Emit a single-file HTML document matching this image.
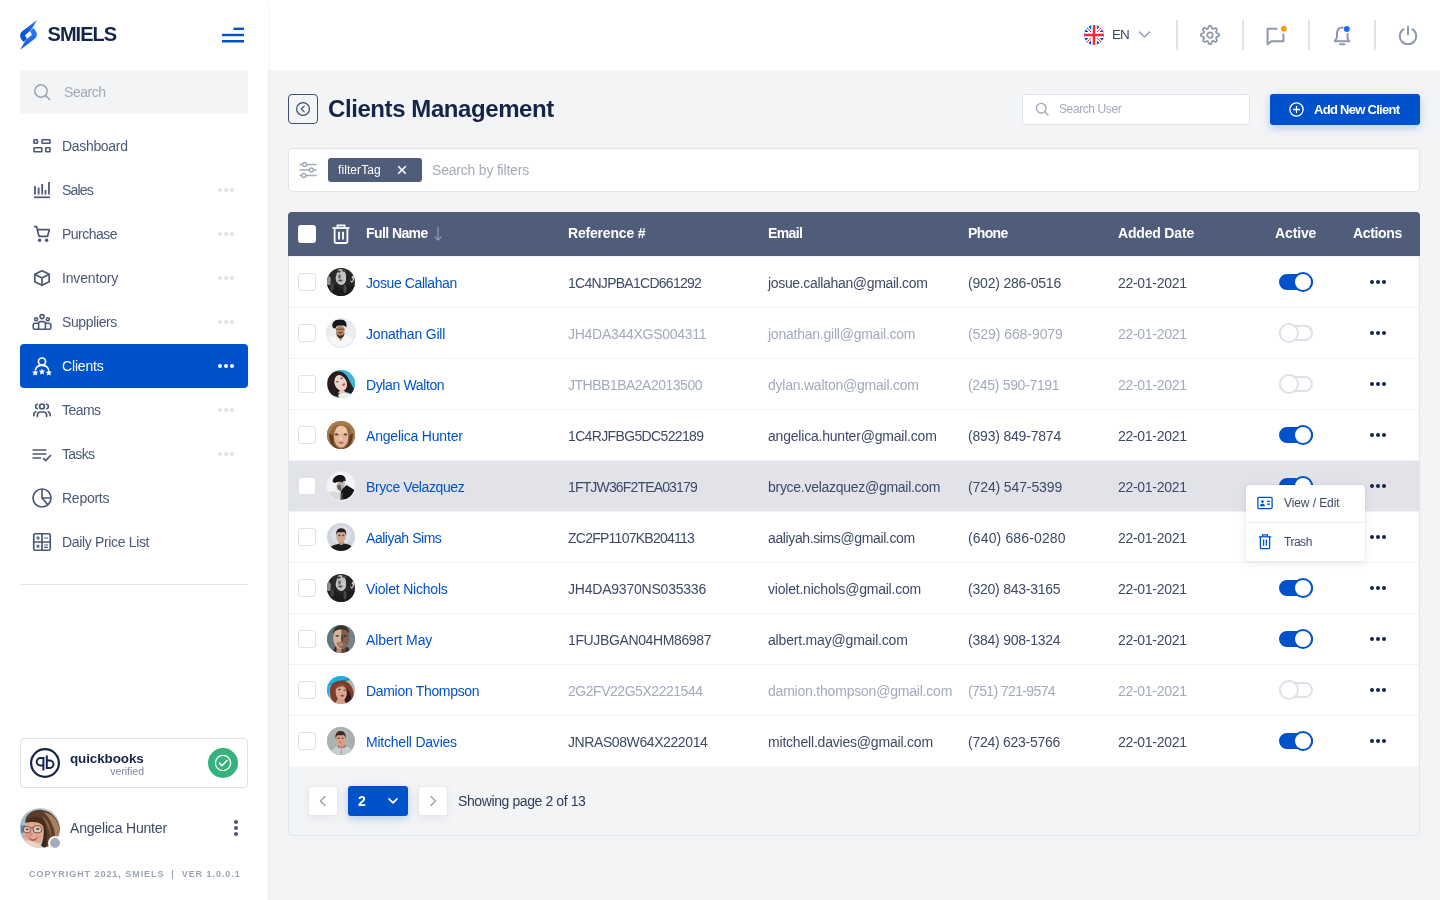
<!DOCTYPE html>
<html lang="en">
<head>
<meta charset="utf-8">
<title>Clients Management</title>
<style>
*{box-sizing:border-box;margin:0;padding:0}
html,body{width:1440px;height:900px;overflow:hidden}
body{font-family:"Liberation Sans",sans-serif;background:#f3f4f6;color:#3c4a67;position:relative}
.abs{position:absolute}
#side,#top,#hdr,#main,#tbl{will-change:transform}
#hdr,#main,#tbl{position:absolute;left:0;top:0;width:1440px;height:900px}
svg{display:block}
/* sidebar */
#side{position:absolute;left:0;top:0;width:268px;height:900px;background:#fff;box-shadow:1px 0 3px rgba(20,30,60,.035);z-index:2}
#top{position:absolute;left:268px;top:0;width:1172px;height:70px;background:#fff}
.brand{position:absolute;left:47.500px;top:22px;font-size:20px;font-weight:700;color:#15254a;letter-spacing:-.95px;line-height:24px}
.sbox{position:absolute;left:20px;top:70px;width:228px;height:44px;background:#f3f4f6;border-radius:4px}
.sbox span{position:absolute;left:44px;top:13px;font-size:14px;line-height:18px;color:#a2abbb;letter-spacing:-.45px}
.nav{position:absolute;left:20px;width:228px;height:44px;border-radius:4px;color:#4a5877;font-size:14px}
.nav .lbl{position:absolute;left:42px;top:13px;line-height:18px;letter-spacing:-.3px}
.nav .ic{position:absolute;left:12px;top:12px;width:20px;height:20px}
.nav .dots{position:absolute;left:198px;top:20px;width:16px;height:4px}
.nav .dots i{position:absolute;top:0;width:4px;height:4px;border-radius:50%;background:#dfe2e9}
.nav .dots i:nth-child(1){left:0}.nav .dots i:nth-child(2){left:6px}.nav .dots i:nth-child(3){left:12px}
.nav.act{background:#0052cc;color:#fff}
.nav.act .dots i{background:#fff}
.vdiv{position:absolute;top:20px;width:2px;height:30px;background:#dfe2e9}

.th{font-size:14px;line-height:18px;font-weight:700;color:#fff;letter-spacing:-.4px;white-space:nowrap}
.row{left:289px;width:1130px;height:51px;border-top:1px solid #f2f3f6}
.cb{left:298px;width:18px;height:18px;background:#fff;border:1px solid #dfe2e9;border-radius:3px}
.td{font-size:14px;line-height:18px;color:#3c4a67;letter-spacing:-.3px;white-space:nowrap}
.td.off{color:#a2abbb}
.td.nm{color:#0052cc}
.td.rf{letter-spacing:-.6px}
.td.ph{letter-spacing:-.2px}
.tg{left:1279px;width:34px;height:16px;border-radius:8px;background:#fff;border:2px solid #dfe1e8}
.tg i{position:absolute;left:-2px;top:-4px;width:20px;height:20px;border-radius:50%;background:#fff;border:2px solid #dfe1e8}
.tg.on{background:#0052cc;border-color:#0052cc}
.tg.on i{left:12px;border-color:#0052cc}
.dd{left:1370px;width:16px;height:4px}
.dd i{position:absolute;top:0;width:4px;height:4px;border-radius:50%;background:#15254a}
.dd i:nth-child(1){left:0}.dd i:nth-child(2){left:6px}.dd i:nth-child(3){left:12px}
.pb{width:30px;height:30px;background:#fff;border:1px solid #e6e8ee;border-radius:3px;box-shadow:0 3px 8px rgba(30,40,70,.06);display:flex;align-items:center;justify-content:center}
.pm{font-size:12px;line-height:16px;color:#3c4a67;letter-spacing:-.2px;white-space:nowrap}
</style>
</head>
<body>
<div id="side">
  <svg class="abs" style="left:20px;top:20px" width="17" height="30" viewBox="0 0 17 30">
    <defs><linearGradient id="lg1" x1="1" y1="0" x2="0" y2="1"><stop offset="0" stop-color="#2b7dff"/><stop offset=".55" stop-color="#1158dc"/><stop offset="1" stop-color="#0052cc"/></linearGradient>
    <linearGradient id="lg2" x1="1" y1="0" x2="0" y2="1"><stop offset="0" stop-color="#1158dc"/><stop offset=".5" stop-color="#1d68ec"/><stop offset="1" stop-color="#2f80ff"/></linearGradient></defs>
    <path d="M17 0L1.900 11.600Q-0.600 14 0.400 17.400Q1.400 20.200 3.800 21.900L7 19L5 15.200L10 11L13 7Z" fill="url(#lg1)"/>
    <path d="M17 0L1.900 11.600Q-0.600 14 0.400 17.400Q1.400 20.200 3.800 21.900L7 19L5 15.200L10 11L13 7Z" fill="url(#lg2)" transform="rotate(180 8.500 15)"/>
  </svg>
  <div class="brand">SMIELS</div>
  <svg class="abs" style="left:221px;top:26px" width="24" height="18" viewBox="0 0 24 18" fill="#0052cc"><rect x="12.500" y="1.600" width="10.500" height="2.400"/><rect x="1" y="7.800" width="22" height="2.400"/><rect x="1" y="14" width="22" height="2.500"/></svg>
  <div class="sbox">
    <svg class="abs" style="left:13px;top:13px" width="18" height="18" viewBox="0 0 18 18" fill="none" stroke="#9aa4b5" stroke-width="1.5" stroke-linecap="round"><circle cx="8" cy="8" r="6.2"/><path d="M12.6 12.6 L16.5 16.5"/></svg>
    <span>Search</span>
  </div>

  <div class="nav" style="top:124px">
    <svg class="ic" viewBox="0 0 20 20" fill="none" stroke="#4a5877" stroke-width="1.600"><rect x="2" y="3.800" width="3.400" height="3.500" rx=".5"/><rect x="10" y="3.800" width="8" height="3.500" rx=".5"/><rect x="2" y="11.700" width="7.800" height="4" rx=".5"/><rect x="13.700" y="11.700" width="4.300" height="4" rx=".5"/></svg>
    <span class="lbl" style="letter-spacing:-0.32px">Dashboard</span>
  </div>
  <div class="nav" style="top:168px">
    <svg class="ic" viewBox="0 0 20 20" fill="none" stroke="#4a5877" stroke-width="1.700" stroke-linecap="butt"><path d="M3 6V14.600M6.600 7.500V14.600M10.200 4V14.600M13.500 10V14.600M17 2V14.600" stroke-width="1.800"/><path d="M2 17.3H18" /></svg>
    <span class="lbl" style="letter-spacing:-0.80px">Sales</span><span class="dots"><i></i><i></i><i></i></span>
  </div>
  <div class="nav" style="top:212px">
    <svg class="ic" viewBox="0 0 20 20" fill="none" stroke="#4a5877" stroke-width="1.700" stroke-linejoin="round"><path d="M2 2.7H4.6L7 12.3H15.6L17.3 5.7H5.4"/><circle cx="7.6" cy="16.3" r="1.700" fill="#4a5877" stroke="none"/><circle cx="14.6" cy="16.3" r="1.700" fill="#4a5877" stroke="none"/></svg>
    <span class="lbl" style="letter-spacing:-0.50px">Purchase</span><span class="dots"><i></i><i></i><i></i></span>
  </div>
  <div class="nav" style="top:256px">
    <svg class="ic" viewBox="0 0 20 20" fill="none" stroke="#4a5877" stroke-width="1.700" stroke-linejoin="round"><path d="M10 2.7L17.2 6.3V13.7L10 17.3L2.8 13.7V6.3Z"/><path d="M2.8 6.3L10 10L17.2 6.3M10 10V17.3"/></svg>
    <span class="lbl" style="letter-spacing:-0.16px">Inventory</span><span class="dots"><i></i><i></i><i></i></span>
  </div>
  <div class="nav" style="top:300px">
    <svg class="ic" viewBox="0 0 20 20" fill="none" stroke="#4a5877" stroke-width="1.600" stroke-linejoin="round"><circle cx="10" cy="4.6" r="2"/><circle cx="4.2" cy="7.2" r="1.5"/><circle cx="15.8" cy="7.2" r="1.5"/><path d="M6.6 17.3V11.6a2 2 0 0 1 2-2h2.8a2 2 0 0 1 2 2V17.3"/><path d="M6.6 11.3H3.2a2 2 0 0 0-2 2V15.8a1.5 1.5 0 0 0 1.5 1.5H17.3a1.5 1.5 0 0 0 1.5-1.5V13.3a2 2 0 0 0-2-2H13.4"/></svg>
    <span class="lbl" style="letter-spacing:-0.38px">Suppliers</span><span class="dots"><i></i><i></i><i></i></span>
  </div>
  <div class="nav act" style="top:344px">
    <svg class="ic" viewBox="0 0 20 20" fill="none" stroke="#fff" stroke-width="1.700" stroke-linecap="round"><circle cx="10" cy="5.6" r="3.6"/><path d="M3.6 13.2C4.6 10.6 7 9.4 10 9.4s5.4 1.200 6.4 3.800"/><g fill="#fff" stroke="none"><path d="M3.200 13.600l.95 1.950 2.150.3-1.550 1.500.35 2.150-1.900-1-1.900 1 .35-2.150-1.550-1.500 2.150-.3z"/><path d="M3.200 13.600l.95 1.950 2.150.3-1.550 1.500.35 2.150-1.900-1-1.900 1 .35-2.150-1.550-1.500 2.150-.3z" transform="translate(6.800 -1)"/><path d="M3.200 13.600l.95 1.950 2.150.3-1.550 1.500.35 2.150-1.900-1-1.900 1 .35-2.150-1.550-1.500 2.150-.3z" transform="translate(13.600 0)"/></g></svg>
    <span class="lbl" style="letter-spacing:-0.17px">Clients</span><span class="dots"><i></i><i></i><i></i></span>
  </div>
  <div class="nav" style="top:388px">
    <svg class="ic" viewBox="0 0 20 20" fill="none" stroke="#4a5877" stroke-width="1.700" stroke-linecap="round"><circle cx="10" cy="6.400" r="2.400"/><path d="M5.400 16.300v-1.300a3 3 0 0 1 3-3h3.200a3 3 0 0 1 3 3v1.300"/><path d="M5.200 4.200a2.300 2.300 0 0 0 0 4.400M14.800 4.200a2.300 2.300 0 0 1 0 4.400"/><path d="M1.800 15.600v-1a3 3 0 0 1 2-2.800M18.200 15.600v-1a3 3 0 0 0-2-2.800"/></svg>
    <span class="lbl" style="letter-spacing:-0.54px">Teams</span><span class="dots"><i></i><i></i><i></i></span>
  </div>
  <div class="nav" style="top:432px">
    <svg class="ic" viewBox="0 0 20 20" fill="none" stroke="#4a5877" stroke-width="1.700"><path d="M0.500 6H14.500M0.500 10H14.500M0.500 14H9"/><path d="M11.200 14.200L13.600 16.600L19 11" /></svg>
    <span class="lbl" style="letter-spacing:-0.72px">Tasks</span><span class="dots"><i></i><i></i><i></i></span>
  </div>
  <div class="nav" style="top:476px">
    <svg class="ic" viewBox="0 0 20 20" fill="none" stroke="#4a5877" stroke-width="1.700"><circle cx="10" cy="10" r="9"/><path d="M10 1.200V10H18.800M10 10L15.800 16.600"/></svg>
    <span class="lbl" style="letter-spacing:-0.26px">Reports</span>
  </div>
  <div class="nav" style="top:520px">
    <svg class="ic" viewBox="0 0 20 20" fill="none" stroke="#4a5877" stroke-width="1.700"><rect x="1.750" y="1.750" width="16.500" height="16.500" rx="1.500"/><path d="M10 1.750V18.250M1.750 10H18.250"/><path d="M4 6H8M6 4V8M12.200 6H16M4.600 12.800L7.400 15.600M7.400 12.800L4.600 15.600M12.200 13H16M12.200 15.400H16" stroke-width="1.200"/></svg>
    <span class="lbl" style="letter-spacing:-0.34px">Daily Price List</span>
  </div>
  <div class="abs" style="left:20px;top:584px;width:228px;height:1px;background:#e1e4ea"></div>
<div class="abs" style="left:20px;top:738px;width:228px;height:50px;border:1px solid #dfe2e9;border-radius:4px"></div>
  <svg class="abs" style="left:30px;top:748px" width="30" height="30" viewBox="0 0 30 30" fill="none" stroke="#15254a"><circle cx="15" cy="15" r="13.900" stroke-width="2.200"/><path d="M13.400 22.400V10H10.400a3.700 3.700 0 0 0 0 7.400H13" stroke-width="2"/><path d="M16.800 7.600V20H19.800a3.700 3.700 0 0 0 0-7.400H17.200" stroke-width="2"/></svg>
  <div class="abs" id="qb" style="left:70px;top:751px;font-size:13.500px;line-height:16px;font-weight:700;color:#15254a;letter-spacing:-.14px">quickbooks</div>
  <div class="abs" id="vf" style="left:90px;width:54px;text-align:right;top:764.500px;font-size:10.500px;line-height:12px;color:#7c889f;letter-spacing:0">verified</div>
  <svg class="abs" style="left:208px;top:748px" width="30" height="30" viewBox="0 0 30 30"><circle cx="15" cy="15" r="15" fill="#36b27c"/><circle cx="15" cy="15" r="7.600" fill="none" stroke="#fff" stroke-width="1.300"/><path d="M11.400 15.200L14 17.700L19 12.500" fill="none" stroke="#fff" stroke-width="1.600" stroke-linecap="round" stroke-linejoin="round"/></svg>
  <svg class="abs" style="left:20px;top:808px" width="44" height="44" viewBox="0 0 44 44">
    <defs><clipPath id="uc"><circle cx="20" cy="20" r="20"/></clipPath><filter id="ub" x="-10%" y="-10%" width="120%" height="120%"><feGaussianBlur stdDeviation="0.550"/></filter></defs>
    <g clip-path="url(#uc)">
      <rect width="40" height="40" fill="#b4c8d8"/>
      <g filter="url(#ub)">
      <path d="M0 8L8 2L6 30L0 32Z" fill="#a2bbd0"/>
      <path d="M1 18L5 17L5 24L1 25Z" fill="#6a7a90"/>
      <path d="M16 0H32L40 10V0Z" fill="#c6d6e2"/>
      <path d="M5 14C6 5 14 1 22 2C31 3 38 10 40 20C41 28 38 34 33 37L26 41L22 38C26 30 27 20 22 12C16 9 10 10 5 14Z" fill="#5b3c2c"/>
      <path d="M24 4C32 6 38 12 39.500 20C40 26 38 31 35 33C36 24 33 14 24 4Z" fill="#a8805e"/>
      <path d="M22 8C28 12 32 20 31 30C29 22 27 15 22 8Z" fill="#8a6448"/>
      <ellipse cx="14.500" cy="23.500" rx="10.400" ry="14" fill="#e2a98c" transform="rotate(8 14.500 23.500)"/>
      <ellipse cx="8" cy="27" rx="3" ry="2.500" fill="#e08a7a" opacity=".6"/>
      <path d="M5 15C8 9 15 7 22 10C25 13 26 17 25.500 22C23 16 18 12 5 15Z" fill="#4a2e22"/>
      <path d="M22 14C27 18 28 30 25 40L21 38C24 30 25 22 22 14Z" fill="#3a2620"/>
      <rect x="3.500" y="18.500" width="7" height="6.200" rx="2.500" fill="#ecc0aa" stroke="#6e5a5e" stroke-width=".9"/>
      <rect x="13.200" y="17.800" width="8.400" height="7" rx="2.800" fill="#e8c4b2" stroke="#6e5a5e" stroke-width="1"/>
      <ellipse cx="17.800" cy="21" rx="1.800" ry="1" fill="#3a6a6a"/><ellipse cx="7.200" cy="21.300" rx="1.400" ry=".9" fill="#3a4a4a"/>
      <path d="M10.500 19.800H13.200" stroke="#6e5a5e" stroke-width=".9"/>
      <ellipse cx="10.800" cy="26" rx="1.800" ry="1.600" fill="#d08a74"/>
      <path d="M8.600 29C11 30.200 15 30 17.800 28.200C17.200 32 14 33.500 11.800 33C10 32.500 9 31 8.600 29Z" fill="#b85a64"/>
      <path d="M9.200 29.300C11.500 30.300 15 30 17 28.800C16 30.800 11.500 31.600 9.200 29.300Z" fill="#fbfbfb"/>
      <path d="M4 33C8 31 14 34 19 36L24 40H6Z" fill="#ead4c2"/>
      <path d="M2 31L6 33L8 40H3Z" fill="#d8b8a2"/>
      </g>
    </g>
    <circle cx="35" cy="35" r="6" fill="#a3abbd" stroke="#fff" stroke-width="2"/>
  </svg>
  <div class="abs" id="uname" style="left:70px;top:819px;font-size:14px;line-height:18px;color:#3c4a67;letter-spacing:-.18px">Angelica Hunter</div>
  <div class="abs" style="left:234px;top:820px;width:4px;height:4px;border-radius:50%;background:#4a5877;box-shadow:0 6px 0 #4a5877,0 12px 0 #4a5877"></div>
  <div class="abs" id="copy" style="left:29px;top:868px;font-size:9px;line-height:12px;font-weight:700;color:#9aa4b5;letter-spacing:.95px;white-space:pre">COPYRIGHT 2021, SMIELS  |  VER 1.0.0.1</div>
</div>
<div id="top">
  <!-- coordinates inside are page coords minus 269 -->
</div>
<div id="hdr">
  <!-- flag -->
  <svg class="abs" style="left:1084px;top:25px" width="20" height="20" viewBox="0 0 20 20">
    <defs><clipPath id="fc"><circle cx="10" cy="10" r="10"/></clipPath></defs>
    <g clip-path="url(#fc)">
      <rect width="20" height="20" fill="#0d49cf"/>
      <path d="M0 0L20 20M20 0L0 20" stroke="#fff" stroke-width="3.600"/>
      <path d="M0 0L20 20M20 0L0 20" stroke="#f6303f" stroke-width="1"/>
      <path d="M10 0V20M0 10H20" stroke="#fff" stroke-width="5.800"/>
      <path d="M10 0V20M0 10H20" stroke="#f8283a" stroke-width="2.500"/>
    </g>
  </svg>
  <div class="abs" style="left:1112px;top:26px;font-size:13.500px;line-height:18px;color:#3c4a67;letter-spacing:-1.100px">EN</div>
  <svg class="abs" style="left:1138px;top:30px" width="13" height="9" viewBox="0 0 13 9" fill="none" stroke="#98a2b3" stroke-width="1.700" stroke-linecap="round" stroke-linejoin="round"><path d="M1.500 2L6.500 7L11.500 2"/></svg>
  <div class="vdiv" style="left:1176px"></div>
  <div class="vdiv" style="left:1242px"></div>
  <div class="vdiv" style="left:1308px"></div>
  <div class="vdiv" style="left:1374px"></div>
  <!-- gear -->
  <svg class="abs" style="left:1200px;top:25px" width="20" height="20" viewBox="0 0 24 24" fill="none" stroke="#8d98ad" stroke-width="2.100" stroke-linejoin="round"><circle cx="12" cy="12" r="3.300"/><path d="M19.400 15a1.650 1.650 0 0 0 .33 1.820l.060.060a2 2 0 1 1-2.830 2.830l-.060-.060a1.650 1.650 0 0 0-1.820-.33 1.650 1.650 0 0 0-1 1.510V21a2 2 0 0 1-4 0v-.090A1.650 1.650 0 0 0 9 19.400a1.650 1.650 0 0 0-1.820.33l-.060.060a2 2 0 1 1-2.830-2.830l.060-.060a1.650 1.650 0 0 0 .33-1.820 1.650 1.650 0 0 0-1.510-1H3a2 2 0 0 1 0-4h.090A1.650 1.650 0 0 0 4.600 9a1.650 1.650 0 0 0-.33-1.820l-.060-.060a2 2 0 1 1 2.830-2.830l.060.060a1.650 1.650 0 0 0 1.820.33H9a1.650 1.650 0 0 0 1-1.510V3a2 2 0 0 1 4 0v.090a1.650 1.650 0 0 0 1 1.510 1.650 1.650 0 0 0 1.820-.33l.060-.060a2 2 0 1 1 2.830 2.830l-.060.060a1.650 1.650 0 0 0-.33 1.820V9a1.650 1.650 0 0 0 1.510 1H21a2 2 0 0 1 0 4h-.090a1.650 1.650 0 0 0-1.510 1z"/></svg>
  <!-- chat -->
  <svg class="abs" style="left:1265px;top:24px" width="24" height="24" viewBox="0 0 24 24" fill="none"><path d="M12.500 4.800H2.600V20.300L6.400 17.200H18.400V9.600" stroke="#8d98ad" stroke-width="2" stroke-linejoin="round"/><circle cx="18.800" cy="4.800" r="3" fill="#ff9f0a"/></svg>
  <!-- bell -->
  <svg class="abs" style="left:1332px;top:24px" width="22" height="24" viewBox="0 0 22 24" fill="none"><path d="M10.600 3.400A5.300 5.300 0 0 0 5 8.700V13.600L2.800 17.300H17.200L15.600 14.600V10" stroke="#8d98ad" stroke-width="2" stroke-linejoin="round" stroke-linecap="round"/><path d="M8 20.300H12.400" stroke="#8d98ad" stroke-width="2" stroke-linecap="round"/><circle cx="14.800" cy="5" r="3" fill="#1a6cf0"/></svg>
  <!-- power -->
  <svg class="abs" style="left:1398px;top:25px" width="20" height="20" viewBox="0 0 20 20" fill="none" stroke="#8d98ad" stroke-width="2" stroke-linecap="round"><path d="M10 1.800V9.600"/><path d="M5.600 4.200A8.200 8.200 0 1 0 14.400 4.200"/></svg>
</div>
<div id="main">
  <div class="abs" style="left:288px;top:94px;width:30px;height:30px;border:1px solid #3f4d6e;border-radius:4px"></div>
  <svg class="abs" style="left:295px;top:101px" width="16" height="16" viewBox="0 0 16 16" fill="none" stroke="#3f4d6e" stroke-width="1.200" stroke-linecap="round" stroke-linejoin="round"><circle cx="8" cy="8" r="6.400"/><path d="M9.200 5.200L6.400 8L9.200 10.800"/></svg>
  <div class="abs" id="title" style="left:328px;top:94px;font-size:24px;line-height:30px;font-weight:700;color:#15254a;letter-spacing:-.42px">Clients Management</div>
  <!-- search user -->
  <div class="abs" style="left:1022px;top:94px;width:228px;height:31px;background:#fff;border:1px solid #dfe2e9;border-radius:3px"></div>
  <svg class="abs" style="left:1035px;top:102px" width="14" height="14" viewBox="0 0 14 14" fill="none" stroke="#9aa4b5" stroke-width="1.300" stroke-linecap="round"><circle cx="6.200" cy="6.200" r="4.800"/><path d="M9.800 9.800L13 13"/></svg>
  <div class="abs" style="left:1059px;top:101px;font-size:12px;line-height:16px;color:#a2abbb;letter-spacing:-.4px">Search User</div>
  <!-- add button -->
  <div class="abs" style="left:1270px;top:94px;width:150px;height:31px;background:#0052cc;border-radius:3px;box-shadow:0 3px 8px rgba(0,82,204,.25)"></div>
  <svg class="abs" style="left:1289px;top:102px" width="15" height="15" viewBox="0 0 15 15" fill="none" stroke="#fff" stroke-width="1.300" stroke-linecap="round"><circle cx="7.500" cy="7.500" r="6.600"/><path d="M7.500 4.500V10.500M4.500 7.500H10.500"/></svg>
  <div class="abs" id="addtxt" style="left:1314px;top:101px;font-size:13px;line-height:17px;font-weight:700;color:#fff;letter-spacing:-.72px">Add New Client</div>
  <!-- filter bar -->
  <div class="abs" style="left:288px;top:148px;width:1132px;height:44px;background:#fff;border:1px solid #e1e4ea;border-radius:4px"></div>
  <svg class="abs" style="left:299px;top:161px" width="18" height="18" viewBox="0 0 18 18" fill="none" stroke="#a2abbb" stroke-width="1.500" stroke-linecap="round"><path d="M1 3.400H3.200M8 3.400H17M1 9H10M14.800 9H17M1 14.600H2.400M7.200 14.600H17"/><circle cx="5.600" cy="3.400" r="2"/><circle cx="12.400" cy="9" r="2"/><circle cx="4.800" cy="14.600" r="2"/></svg>
  <div class="abs" style="left:328px;top:158px;width:94px;height:24px;background:#4f5d7a;border-radius:3px"></div>
  <div class="abs" style="left:338px;top:162px;font-size:12px;line-height:16px;color:#fff;letter-spacing:.08px">filterTag</div>
  <svg class="abs" style="left:397px;top:165px" width="10" height="10" viewBox="0 0 10 10" stroke="#fff" stroke-width="1.600" fill="none"><path d="M1.200 1.200L8.800 8.800M8.800 1.200L1.200 8.800"/></svg>
  <div class="abs" style="left:432px;top:161px;font-size:14px;line-height:18px;color:#a2abbb;letter-spacing:-.2px">Search by filters</div>
</div>
<div id="tbl">
<svg width="0" height="0" style="position:absolute"><defs><filter id="avb" x="-10%" y="-10%" width="120%" height="120%"><feGaussianBlur stdDeviation="0.450"/></filter></defs></svg>
<div class="abs" style="left:288px;top:212px;width:1132px;height:624px;border:1px solid #e1e4ea;border-radius:4px;background:#f3f4f6"></div>
<div class="abs" style="left:288px;top:212px;width:1132px;height:44px;background:#4f5d7a;border-radius:4px 4px 0 0"></div>
<div class="abs" style="left:298px;top:225px;width:18px;height:18px;background:#fff;border-radius:3px"></div>
<svg class="abs" style="left:331px;top:223px" width="20" height="22" viewBox="0 0 20 22" fill="none" stroke="#fff" stroke-width="1.800"><path d="M1.500 5H18.500"/><path d="M6.500 4.600V2.400H13.500V4.600"/><path d="M3.600 5.400V18.500a1.500 1.500 0 0 0 1.500 1.500H14.900a1.500 1.500 0 0 0 1.500-1.500V5.400"/><path d="M8 8.800V16.400M12 8.800V16.400"/></svg>
<div class="abs th" style="left:366px;top:224px;letter-spacing:-0.578px">Full Name</div>
<div class="abs th" style="left:568px;top:224px;letter-spacing:-0.19px">Reference #</div>
<div class="abs th" style="left:768px;top:224px;letter-spacing:-0.612px">Email</div>
<div class="abs th" style="left:968px;top:224px;letter-spacing:-0.616px">Phone</div>
<div class="abs th" style="left:1118px;top:224px;letter-spacing:-0.18px">Added Date</div>
<div class="abs th" style="left:1275px;top:224px;letter-spacing:-0.122px">Active</div>
<div class="abs th" style="left:1353px;top:224px;letter-spacing:-0.349px">Actions</div>
<svg class="abs" style="left:433px;top:226px" width="10" height="16" viewBox="0 0 10 16" fill="none" stroke="#8e99ae" stroke-width="1.300" stroke-linecap="round" stroke-linejoin="round"><path d="M5 1.500V14M2 11L5 14L8 11"/></svg>
<div class="abs row" style="top:256px;background:#fff"></div>
<div class="abs cb" style="top:273px"></div>
<svg class="abs" style="left:326px;top:267px" width="30" height="30" viewBox="-1 -1 30 30"><defs><clipPath id="ac0"><circle cx="14" cy="14" r="14"/></clipPath></defs><g clip-path="url(#ac0)"><rect x="-1" y="-1" width="30" height="30" fill="#262626"/><g filter="url(#avb)"><ellipse cx="1.5" cy="14" rx="3" ry="6" fill="#8c8c8c"/>
<ellipse cx="13.800" cy="9" rx="5.600" ry="8" fill="#c2c2c2" transform="rotate(-8 13.800 9)"/>
<ellipse cx="11.600" cy="3.600" rx="2.200" ry="1.100" fill="#3a3a3a"/><ellipse cx="17" cy="2.800" rx="2.200" ry="1" fill="#4a4a4a"/>
<ellipse cx="12.500" cy="8.500" rx="1.400" ry="2.200" fill="#6a6a6a"/>
<ellipse cx="13.400" cy="12.600" rx="2.200" ry="1" fill="#4a4a4a"/>
<path d="M4 10C6 4 9 2 11 1L8 12L9 20L3 22Z" fill="#2c2c2c"/>
<path d="M19.500 3L23 5L25 10L22 16L19 12Z" fill="#222"/>
<ellipse cx="25.600" cy="11" rx="1.600" ry="3.600" fill="#d6d6d6" transform="rotate(20 25.600 11)"/>
<ellipse cx="24.800" cy="11.500" rx=".9" ry="1.800" fill="#1a1a1a"/>
<path d="M0 17L9 17L13 21L20 17L28 17V28H0Z" fill="#1a1a1a"/>
<ellipse cx="18" cy="21" rx="1.600" ry="4" fill="#4a4a4a"/>
<ellipse cx="5" cy="19" rx="2" ry="4" fill="#3c3c3c"/></g></g></svg>
<div class="abs td nm" style="left:366px;top:274px;letter-spacing:-0.408px">Josue Callahan</div>
<div class="abs td rf" style="left:568px;top:274px;letter-spacing:-0.731px">1C4NJPBA1CD661292</div>
<div class="abs td" style="left:768px;top:274px;letter-spacing:-0.334px">josue.callahan@gmail.com</div>
<div class="abs td ph" style="left:968px;top:274px;letter-spacing:-0.196px">(902) 286-0516</div>
<div class="abs td" style="left:1118px;top:274px">22-01-2021</div>
<div class="abs tg on" style="top:274px"><i></i></div>
<div class="abs dd" style="top:280px"><i></i><i></i><i></i></div>
<div class="abs row" style="top:307px;background:#fff"></div>
<div class="abs cb" style="top:324px"></div>
<svg class="abs" style="left:326px;top:318px" width="30" height="30" viewBox="-1 -1 30 30"><defs><clipPath id="ac1"><circle cx="14" cy="14" r="14"/></clipPath></defs><g clip-path="url(#ac1)"><rect x="-1" y="-1" width="30" height="30" fill="#ececef"/><g filter="url(#avb)"><path d="M-1 19C4 17.500 9 17 13.300 17.500C18 17 24 17.500 29 19.500V29H-1Z" fill="#f7f7f8"/>
<path d="M10.500 17L13.500 22L16.500 17.500L15.500 15H11.500Z" fill="#b57e58"/>
<ellipse cx="13.300" cy="11.800" rx="4.300" ry="5.600" fill="#bb8a66"/>
<path d="M9.200 13.500C9.500 17.500 11.500 19 13.300 19C15.500 19 17.300 17.500 17.500 13.500C16.500 16 15 16.600 13.300 16.600C11.600 16.600 10 16 9.200 13.500Z" fill="#3a2c26"/>
<path d="M10.300 13.800C12 13 14.600 13 16.300 13.800C14.800 14.800 11.800 14.800 10.300 13.800Z" fill="#3a2a24"/>
<path d="M9 10.200H17.600" stroke="#4a4040" stroke-width=".8"/>
<path d="M5.500 8C4.500 3 8 0.300 13 0.500C18 0.300 20.500 3.500 19.300 8.500C18 6.500 16 6.300 13.500 6.600C11 6.300 9 6.800 8.600 9.600C7.500 9.500 6.300 9 5.500 8Z" fill="#17171a"/></g></g><circle cx="14" cy="14" r="14.500" fill="none" stroke="#dfe2ea" stroke-width="1"/></svg>
<div class="abs td nm" style="left:366px;top:325px;letter-spacing:-0.194px">Jonathan Gill</div>
<div class="abs td off rf" style="left:568px;top:325px;letter-spacing:-0.28px">JH4DA344XGS004311</div>
<div class="abs td off" style="left:768px;top:325px;letter-spacing:-0.236px">jonathan.gill@gmail.com</div>
<div class="abs td off ph" style="left:968px;top:325px;letter-spacing:-0.068px">(529) 668-9079</div>
<div class="abs td off" style="left:1118px;top:325px">22-01-2021</div>
<div class="abs tg" style="top:325px"><i></i></div>
<div class="abs dd" style="top:331px"><i></i><i></i><i></i></div>
<div class="abs row" style="top:358px;background:#fff"></div>
<div class="abs cb" style="top:375px"></div>
<svg class="abs" style="left:326px;top:369px" width="30" height="30" viewBox="-1 -1 30 30"><defs><clipPath id="ac2"><circle cx="14" cy="14" r="14"/></clipPath></defs><g clip-path="url(#ac2)"><rect x="-1" y="-1" width="30" height="30" fill="#36b0cf"/><g filter="url(#avb)"><path d="M12 -1L29 -1L29 20L24 16Z" fill="#3fb6d4"/>
<path d="M1 9C3 3 8 0.500 13 1.500C18 2.500 21 7 23 12L27 19L24.500 24L20 22L14 28L4 25C0 19 0 13 1 9Z" fill="#2a1b1c"/>
<ellipse cx="13.600" cy="13" rx="6" ry="8.200" fill="#edd2c6" transform="rotate(-24 13.600 13)"/>
<path d="M14 19L19.500 22.500L16 25L11 23Z" fill="#e6c6b8"/>
<ellipse cx="10.200" cy="11.800" rx="1.300" ry=".8" fill="#4a5a70"/><ellipse cx="14.600" cy="8.400" rx="1.200" ry=".8" fill="#4a5a70"/>
<ellipse cx="16.800" cy="14.600" rx="1.700" ry="1.200" fill="#d2506c" transform="rotate(-30 16.800 14.600)"/>
<path d="M5 8C6 4 9 2.500 12 3C9 5 7.500 8 7 12L6 19C4 15 4 11 5 8Z" fill="#2a1b1c"/>
<path d="M11 25C14 22.500 20 22.500 23.500 24.500L21 28H12Z" fill="#eeeeea"/></g></g></svg>
<div class="abs td nm" style="left:366px;top:376px;letter-spacing:-0.371px">Dylan Walton</div>
<div class="abs td off rf" style="left:568px;top:376px;letter-spacing:-0.496px">JTHBB1BA2A2013500</div>
<div class="abs td off" style="left:768px;top:376px;letter-spacing:-0.234px">dylan.walton@gmail.com</div>
<div class="abs td off ph" style="left:968px;top:376px;letter-spacing:-0.318px">(245) 590-7191</div>
<div class="abs td off" style="left:1118px;top:376px">22-01-2021</div>
<div class="abs tg" style="top:376px"><i></i></div>
<div class="abs dd" style="top:382px"><i></i><i></i><i></i></div>
<div class="abs row" style="top:409px;background:#fff"></div>
<div class="abs cb" style="top:426px"></div>
<svg class="abs" style="left:326px;top:420px" width="30" height="30" viewBox="-1 -1 30 30"><defs><clipPath id="ac3"><circle cx="14" cy="14" r="14"/></clipPath></defs><g clip-path="url(#ac3)"><rect x="-1" y="-1" width="30" height="30" fill="#8e6038"/><g filter="url(#avb)"><circle cx="14" cy="14" r="14" fill="#94663e"/>
<path d="M0 8C2 2 8 -1 14 0C20 -1 26 2 28 8C29 14 28 20 25 24C26 17 25 10 22 6C18 3 10 3 6 6C3 10 2 17 3 24C0 20 -1 14 0 8Z" fill="#a87a4e"/>
<path d="M2 12C2 18 4 23 7 26L6 15ZM26 12C26 18 24 23 21 26L22 15Z" fill="#5e3c22"/>
<ellipse cx="14.200" cy="15.400" rx="7.200" ry="11" fill="#e3b595"/>
<ellipse cx="14.200" cy="9" rx="5.500" ry="4" fill="#ebc6a8"/>
<ellipse cx="9.600" cy="13.400" rx="1.900" ry="1" fill="#5a4038"/><ellipse cx="18.400" cy="13.400" rx="1.900" ry="1" fill="#5a4038"/>
<ellipse cx="14" cy="17.500" rx="1.200" ry="1.800" fill="#f0d0b8"/>
<ellipse cx="14" cy="21.800" rx="2.800" ry="1" fill="#b06a70"/>
<path d="M7 22C9 26 11 27.500 14 27.800C17 27.500 19 26 21 22L22 28H6Z" fill="#6a4428"/></g></g></svg>
<div class="abs td nm" style="left:366px;top:427px;letter-spacing:-0.195px">Angelica Hunter</div>
<div class="abs td rf" style="left:568px;top:427px;letter-spacing:-0.641px">1C4RJFBG5DC522189</div>
<div class="abs td" style="left:768px;top:427px;letter-spacing:-0.206px">angelica.hunter@gmail.com</div>
<div class="abs td ph" style="left:968px;top:427px;letter-spacing:-0.196px">(893) 849-7874</div>
<div class="abs td" style="left:1118px;top:427px">22-01-2021</div>
<div class="abs tg on" style="top:427px"><i></i></div>
<div class="abs dd" style="top:433px"><i></i><i></i><i></i></div>
<div class="abs row" style="top:460px;background:#e1e3e9"></div>
<div class="abs cb" style="top:477px"></div>
<svg class="abs" style="left:326px;top:471px" width="30" height="30" viewBox="-1 -1 30 30"><defs><clipPath id="ac4"><circle cx="14" cy="14" r="14"/></clipPath></defs><g clip-path="url(#ac4)"><rect x="-1" y="-1" width="30" height="30" fill="#f3f3f5"/><g filter="url(#avb)"><path d="M2 20C6 19 11 20 14 21V29H2Z" fill="#d9d9d5"/>
<ellipse cx="13.400" cy="14" rx="3.800" ry="4.800" fill="#b9aaa4" transform="rotate(18 13.400 14)"/>
<ellipse cx="16.500" cy="11.500" rx="1.600" ry="2.400" fill="#c8bdb8"/>
<path d="M10.300 13.500L13 12.500L14.500 17.500L13 19L11 17Z" fill="#6a5e5c"/>
<path d="M5.500 9.500C6 5 10 2.500 14 3C17.500 3.500 19 6 18.500 9.500C17 8 16 8.500 15.500 11L14.500 10C12 9 9 10.500 7.500 11Z" fill="#131318"/>
<path d="M13.500 29L13.800 19.500L16 16.500L19.500 13L27.500 18L26 24L21 29Z" fill="#141418"/>
<path d="M14 22L16 20L15.500 28H14Z" fill="#4a4a4e"/></g></g><circle cx="14" cy="14" r="14.500" fill="none" stroke="#eceef2" stroke-width="1"/></svg>
<div class="abs td nm" style="left:366px;top:478px;letter-spacing:-0.4px">Bryce Velazquez</div>
<div class="abs td rf" style="left:568px;top:478px;letter-spacing:-0.84px">1FTJW36F2TEA03179</div>
<div class="abs td" style="left:768px;top:478px;letter-spacing:-0.279px">bryce.velazquez@gmail.com</div>
<div class="abs td ph" style="left:968px;top:478px;letter-spacing:-0.118px">(724) 547-5399</div>
<div class="abs td" style="left:1118px;top:478px">22-01-2021</div>
<div class="abs tg on" style="top:478px"><i></i></div>
<div class="abs dd" style="top:484px"><i></i><i></i><i></i></div>
<div class="abs row" style="top:511px;background:#fff"></div>
<div class="abs cb" style="top:528px"></div>
<svg class="abs" style="left:326px;top:522px" width="30" height="30" viewBox="-1 -1 30 30"><defs><clipPath id="ac5"><circle cx="14" cy="14" r="14"/></clipPath></defs><g clip-path="url(#ac5)"><rect x="-1" y="-1" width="30" height="30" fill="#d0d4dc"/><g filter="url(#avb)"><circle cx="14" cy="12" r="10" fill="#dddfe6"/>
<path d="M3.500 29L4 23.500C6 22 10 21.200 12 20.800L14.200 22L17 20.600C20 21 23 22 24.600 23.500L25 29Z" fill="#1a1c1f"/>
<path d="M11.600 17H16.800L17.200 20.800L14.200 22.200L11.800 20.900Z" fill="#b88a72"/>
<ellipse cx="14" cy="13.600" rx="4.600" ry="6.300" fill="#cfa590"/>
<ellipse cx="12.300" cy="12.400" rx="1.400" ry=".8" fill="#6a5048"/><ellipse cx="16.200" cy="12.400" rx="1.300" ry=".8" fill="#6a5048"/>
<path d="M9.300 12C8.600 7.500 11 5 14.400 5.200C18 5.200 20 8 19 13C18.600 10.500 18 9.500 17 9C14.500 9.500 11.500 9 10.300 9.600C9.800 10.500 9.600 11 9.300 12Z" fill="#2c1e1a"/></g></g></svg>
<div class="abs td nm" style="left:366px;top:529px;letter-spacing:-0.46px">Aaliyah Sims</div>
<div class="abs td rf" style="left:568px;top:529px;letter-spacing:-0.747px">ZC2FP1107KB204113</div>
<div class="abs td" style="left:768px;top:529px;letter-spacing:-0.379px">aaliyah.sims@gmail.com</div>
<div class="abs td ph" style="left:968px;top:529px;letter-spacing:0.139px">(640) 686-0280</div>
<div class="abs td" style="left:1118px;top:529px">22-01-2021</div>
<div class="abs tg on" style="top:529px"><i></i></div>
<div class="abs dd" style="top:535px"><i></i><i></i><i></i></div>
<div class="abs row" style="top:562px;background:#fff"></div>
<div class="abs cb" style="top:579px"></div>
<svg class="abs" style="left:326px;top:573px" width="30" height="30" viewBox="-1 -1 30 30"><defs><clipPath id="ac6"><circle cx="14" cy="14" r="14"/></clipPath></defs><g clip-path="url(#ac6)"><rect x="-1" y="-1" width="30" height="30" fill="#262626"/><g filter="url(#avb)"><ellipse cx="1.5" cy="14" rx="3" ry="6" fill="#8c8c8c"/>
<ellipse cx="13.800" cy="9" rx="5.600" ry="8" fill="#c2c2c2" transform="rotate(-8 13.800 9)"/>
<ellipse cx="11.600" cy="3.600" rx="2.200" ry="1.100" fill="#3a3a3a"/><ellipse cx="17" cy="2.800" rx="2.200" ry="1" fill="#4a4a4a"/>
<ellipse cx="12.500" cy="8.500" rx="1.400" ry="2.200" fill="#6a6a6a"/>
<ellipse cx="13.400" cy="12.600" rx="2.200" ry="1" fill="#4a4a4a"/>
<path d="M4 10C6 4 9 2 11 1L8 12L9 20L3 22Z" fill="#2c2c2c"/>
<path d="M19.500 3L23 5L25 10L22 16L19 12Z" fill="#222"/>
<ellipse cx="25.600" cy="11" rx="1.600" ry="3.600" fill="#d6d6d6" transform="rotate(20 25.600 11)"/>
<ellipse cx="24.800" cy="11.500" rx=".9" ry="1.800" fill="#1a1a1a"/>
<path d="M0 17L9 17L13 21L20 17L28 17V28H0Z" fill="#1a1a1a"/>
<ellipse cx="18" cy="21" rx="1.600" ry="4" fill="#4a4a4a"/>
<ellipse cx="5" cy="19" rx="2" ry="4" fill="#3c3c3c"/></g></g></svg>
<div class="abs td nm" style="left:366px;top:580px;letter-spacing:-0.212px">Violet Nichols</div>
<div class="abs td rf" style="left:568px;top:580px;letter-spacing:-0.215px">JH4DA9370NS035336</div>
<div class="abs td" style="left:768px;top:580px;letter-spacing:-0.215px">violet.nichols@gmail.com</div>
<div class="abs td ph" style="left:968px;top:580px;letter-spacing:-0.239px">(320) 843-3165</div>
<div class="abs td" style="left:1118px;top:580px">22-01-2021</div>
<div class="abs tg on" style="top:580px"><i></i></div>
<div class="abs dd" style="top:586px"><i></i><i></i><i></i></div>
<div class="abs row" style="top:613px;background:#fff"></div>
<div class="abs cb" style="top:630px"></div>
<svg class="abs" style="left:326px;top:624px" width="30" height="30" viewBox="-1 -1 30 30"><defs><clipPath id="ac7"><circle cx="14" cy="14" r="14"/></clipPath></defs><g clip-path="url(#ac7)"><rect x="-1" y="-1" width="30" height="30" fill="#687a86"/><g filter="url(#avb)"><circle cx="14" cy="14" r="14" fill="#64767f"/>
<ellipse cx="22" cy="14" rx="7" ry="12" fill="#72858f"/>
<path d="M5.500 28L8 22H21L23.500 28Z" fill="#3c2628"/>
<path d="M9.500 20H19V28H9.500Z" fill="#b08c76"/>
<path d="M14.400 20H19V28H14.400Z" fill="#5e4438"/>
<ellipse cx="14.200" cy="12.800" rx="8" ry="11.200" fill="#d5b49d"/>
<path d="M14.400 1.600C20 1.600 22.400 7 22.200 13C22 19 19 24 14.400 24Z" fill="#7e5e4e"/>
<path d="M14.400 10C16 10 17 13 14.400 17Z" fill="#4a342c"/>
<path d="M6 9C6 3 10 0.500 14.200 0.500C19 0.500 22.400 3 22.400 9C21 5.500 18 4.500 14.200 4.500C10.500 4.500 7.500 5.500 6 9Z" fill="#3b3029"/>
<ellipse cx="10.300" cy="10.800" rx="2" ry=".9" fill="#4c4c52"/><ellipse cx="18" cy="10.800" rx="1.800" ry=".9" fill="#33333a"/>
<path d="M9.500 17.500C11 16.500 17 16.500 19 17.500C19 21 17 23 14.200 23C11.500 23 9.800 21 9.500 17.500Z" fill="#8e6e5c" opacity=".8"/>
<ellipse cx="14" cy="19.500" rx="2" ry=".9" fill="#c08a86"/></g></g></svg>
<div class="abs td nm" style="left:366px;top:631px;letter-spacing:-0.062px">Albert May</div>
<div class="abs td rf" style="left:568px;top:631px;letter-spacing:-0.371px">1FUJBGAN04HM86987</div>
<div class="abs td" style="left:768px;top:631px;letter-spacing:-0.184px">albert.may@gmail.com</div>
<div class="abs td ph" style="left:968px;top:631px;letter-spacing:-0.239px">(384) 908-1324</div>
<div class="abs td" style="left:1118px;top:631px">22-01-2021</div>
<div class="abs tg on" style="top:631px"><i></i></div>
<div class="abs dd" style="top:637px"><i></i><i></i><i></i></div>
<div class="abs row" style="top:664px;background:#fff"></div>
<div class="abs cb" style="top:681px"></div>
<svg class="abs" style="left:326px;top:675px" width="30" height="30" viewBox="-1 -1 30 30"><defs><clipPath id="ac8"><circle cx="14" cy="14" r="14"/></clipPath></defs><g clip-path="url(#ac8)"><rect x="-1" y="-1" width="30" height="30" fill="#b6baae"/><g filter="url(#avb)"><path d="M-1 -1H20L22 3L3 8L2 22L-1 24Z" fill="#1fb0ea"/>
<path d="M2.500 8L21.500 2.500L23 4L3 9.500Z" fill="#1684b0"/>
<path d="M3 16C2 9 8 4.500 14.500 4.500C21 4.500 26 10 26.500 17C27 22 24 26 21 27L8 27C4 24 3 20 3 16Z" fill="#7c3c2a"/>
<path d="M18 12C22 14 25 19 24 25L20 27.500L17 22Z" fill="#34151c"/>
<ellipse cx="14.200" cy="16.600" rx="5.600" ry="7.800" fill="#dba88f" transform="rotate(-6 14.200 16.600)"/>
<path d="M9 26L11 22.500L17 23L19 29H8Z" fill="#d49e84"/>
<path d="M7.500 14C8 9 11 7 15 7.500C18 8 20 10 20.500 14C18 10.500 16 10 14 10.500C11 11 9 12 7.500 14Z" fill="#8a4630"/>
<ellipse cx="12.300" cy="13.600" rx="1.500" ry=".8" fill="#4a4a5a"/><ellipse cx="17.600" cy="14.300" rx="1.300" ry=".8" fill="#4a5a72"/>
<ellipse cx="15.400" cy="19.800" rx="2" ry="1" fill="#9c3c50"/></g></g></svg>
<div class="abs td nm" style="left:366px;top:682px;letter-spacing:-0.315px">Damion Thompson</div>
<div class="abs td off rf" style="left:568px;top:682px;letter-spacing:-0.462px">2G2FV22G5X2221544</div>
<div class="abs td off" style="left:768px;top:682px;letter-spacing:-0.208px">damion.thompson@gmail.com</div>
<div class="abs td off ph" style="left:968px;top:682px;letter-spacing:-0.625px">(751) 721-9574</div>
<div class="abs td off" style="left:1118px;top:682px">22-01-2021</div>
<div class="abs tg" style="top:682px"><i></i></div>
<div class="abs dd" style="top:688px"><i></i><i></i><i></i></div>
<div class="abs row" style="top:715px;background:#fff"></div>
<div class="abs cb" style="top:732px"></div>
<svg class="abs" style="left:326px;top:726px" width="30" height="30" viewBox="-1 -1 30 30"><defs><clipPath id="ac9"><circle cx="14" cy="14" r="14"/></clipPath></defs><g clip-path="url(#ac9)"><rect x="-1" y="-1" width="30" height="30" fill="#a8adad"/><g filter="url(#avb)"><circle cx="10" cy="10" r="12" fill="#adb2b2"/>
<path d="M2.500 29L4.500 23C6.500 21.500 9 20 10.600 19L14.200 21L19 19C21 20 23.500 21.500 25 23L26 29Z" fill="#c5cdcd"/>
<path d="M10.400 19C12 22 17 22 19.200 19L18.600 18H11Z" fill="#a0527c"/>
<path d="M11.200 16H17.400L17.800 19.300C16 21 13 21 11.600 19.300Z" fill="#c79880"/>
<ellipse cx="13.500" cy="12.800" rx="4.600" ry="6.200" fill="#d2a48c"/>
<ellipse cx="11.600" cy="11.300" rx="1.400" ry=".7" fill="#6a5048"/><ellipse cx="15.500" cy="11.300" rx="1.300" ry=".7" fill="#6a5048"/>
<ellipse cx="13.300" cy="15.500" rx="1.600" ry=".7" fill="#b87a70"/>
<path d="M8.600 11.500C7.800 6.500 10.500 3.800 13.800 4C17.500 4 19.400 7 18.400 12C18.200 9.500 17.600 8.600 16.500 8C14 8.500 11.500 8 10 8.600C9.400 9.500 9 10.500 8.600 11.500Z" fill="#3a2b25"/>
<path d="M14 22L15 24L14.400 28H13.600Z" fill="#8e9a9c"/></g></g></svg>
<div class="abs td nm" style="left:366px;top:733px;letter-spacing:-0.216px">Mitchell Davies</div>
<div class="abs td rf" style="left:568px;top:733px;letter-spacing:-0.407px">JNRAS08W64X222014</div>
<div class="abs td" style="left:768px;top:733px;letter-spacing:-0.197px">mitchell.davies@gmail.com</div>
<div class="abs td ph" style="left:968px;top:733px;letter-spacing:-0.261px">(724) 623-5766</div>
<div class="abs td" style="left:1118px;top:733px">22-01-2021</div>
<div class="abs tg on" style="top:733px"><i></i></div>
<div class="abs dd" style="top:739px"><i></i><i></i><i></i></div>
<div class="abs pb" style="left:308px;top:786px"><svg width="10" height="12" viewBox="0 0 10 12" fill="none" stroke="#9aa4b5" stroke-width="1.500" stroke-linecap="round" stroke-linejoin="round"><path d="M7 1.500L2.500 6L7 10.500"/></svg></div>
<div class="abs" style="left:348px;top:786px;width:60px;height:30px;background:#0052cc;border-radius:3px;box-shadow:0 3px 8px rgba(0,82,204,.25)"></div>
<div class="abs" style="left:358px;top:792px;font-size:14px;line-height:18px;font-weight:700;color:#fff">2</div>
<svg class="abs" style="left:387px;top:797px" width="12" height="8" viewBox="0 0 12 8" fill="none" stroke="#fff" stroke-width="1.700" stroke-linecap="round" stroke-linejoin="round"><path d="M2 1.800L6 5.800L10 1.800"/></svg>
<div class="abs pb" style="left:418px;top:786px"><svg width="10" height="12" viewBox="0 0 10 12" fill="none" stroke="#9aa4b5" stroke-width="1.500" stroke-linecap="round" stroke-linejoin="round"><path d="M3 1.500L7.500 6L3 10.500"/></svg></div>
<div class="abs" id="showing" style="left:458px;top:792px;font-size:14px;line-height:18px;color:#2f3c5a;letter-spacing:-.4px">Showing page 2 of 13</div>
<div class="abs" style="left:1246px;top:485px;width:119px;height:76px;background:#fff;border-radius:4px;box-shadow:0 2px 8px rgba(30,40,70,.10),0 0 1px rgba(30,40,70,.18)"></div>
<div class="abs" style="left:1246px;top:522px;width:119px;height:1px;background:#eceef2"></div>
<svg class="abs" style="left:1257px;top:496px" width="16" height="14" viewBox="0 0 16 14" fill="none" stroke="#0052cc" stroke-width="1.300"><rect x="0.900" y="1.400" width="14.200" height="11.200" rx="1"/><circle cx="5.400" cy="5.600" r="1.400" fill="#0052cc" stroke="none"/><path d="M2.800 10.200C3 8.400 4.200 7.800 5.400 7.800S7.800 8.400 8 10.200Z" fill="#0052cc" stroke="none"/><path d="M10 5.400H13M10 8.200H13"/></svg>
<div class="abs pm" style="left:1284px;top:495px;letter-spacing:-.09px">View / Edit</div>
<svg class="abs" style="left:1258px;top:533px" width="14" height="17" viewBox="0 0 14 17" fill="none" stroke="#0052cc" stroke-width="1.300"><path d="M0.800 3.800H13.200"/><path d="M4.600 3.600V1.800H9.400V3.600"/><path d="M2.400 4V14.400a1.200 1.200 0 0 0 1.200 1.200H10.400a1.200 1.200 0 0 0 1.200-1.200V4"/><path d="M5.600 6.600V12.800M8.400 6.600V12.800"/></svg>
<div class="abs pm" style="left:1284px;top:534px;letter-spacing:-.48px">Trash</div>
</div>
<!--endtbl-->
</body>
</html>
